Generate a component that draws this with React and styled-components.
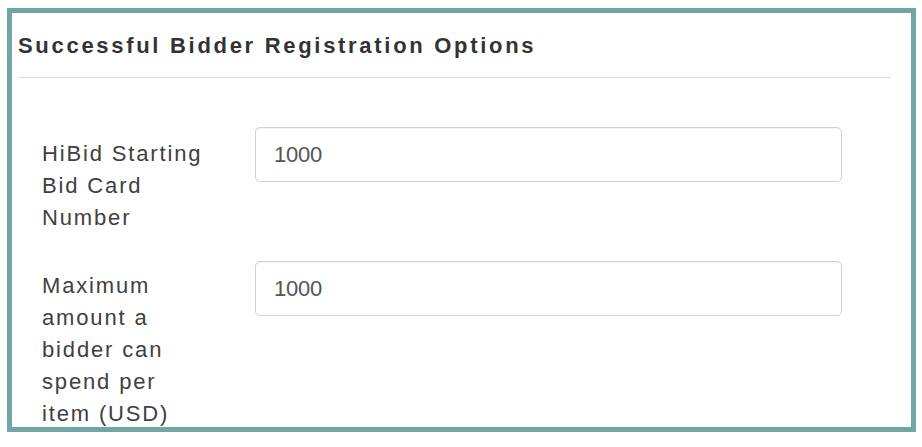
import React from 'react';
import styled, { createGlobalStyle } from 'styled-components';

const GlobalStyle = createGlobalStyle`
  html, body {
    margin: 0;
    padding: 0;
    background: #ffffff;
  }
  body {
    font-family: "Liberation Sans", Arial, sans-serif;
  }
`;

const Shell = styled.div`
  padding: 8px 6px 15px 7px;
`;

const Frame = styled.section`
  box-sizing: border-box;
  height: 424px;
  border: 5px solid #70a6a3;
  overflow: hidden;
  background: #fff;
`;

const Header = styled.header`
  padding: 20px 20px 0 6px;
`;

const Title = styled.h2`
  margin: 0;
  font-size: 22px;
  line-height: 25px;
  font-weight: bold;
  letter-spacing: 2.7px;
  color: #333;
`;

const Divider = styled.hr`
  margin: 19px 0 0;
  border: 0;
  border-top: 1px solid #dcdcdc;
`;

const Form = styled.form`
  display: flex;
  flex-direction: column;
  gap: 27px;
  padding: 49px 0 0 30px;
`;

const Row = styled.div`
  display: grid;
  grid-template-columns: 164px 587px;
  column-gap: 49px;
  align-items: start;
`;

const Label = styled.label`
  padding-top: ${({ $offset }) => $offset}px;
  font-size: 22px;
  line-height: 32px;
  letter-spacing: 1.85px;
  color: #404040;
`;

const Input = styled.input`
  box-sizing: border-box;
  width: 100%;
  height: 55px;
  padding: 0 18px;
  border: 1px solid #d2d2d2;
  border-radius: 5px;
  box-shadow: inset 0 1px 1px rgba(0, 0, 0, 0.05);
  font-family: "Liberation Sans", Arial, sans-serif;
  font-size: 22px;
  letter-spacing: -0.2px;
  color: #555;
  outline: none;
`;

const fields = [
  { id: 'startCard', label: 'HiBid Starting Bid Card Number', value: '1000', offset: 11 },
  { id: 'maxSpend', label: 'Maximum amount a bidder can spend per item (USD)', value: '1000', offset: 9 },
];

const App = () => {
  return (
    <>
      <GlobalStyle />
      <Shell>
        <Frame>
          <Header>
            <Title>Successful Bidder Registration Options</Title>
            <Divider />
          </Header>
          <Form>
            {fields.map((f) => (
              <Row key={f.id}>
                <Label htmlFor={f.id} $offset={f.offset}>{f.label}</Label>
                <Input id={f.id} type="text" defaultValue={f.value} />
              </Row>
            ))}
          </Form>
        </Frame>
      </Shell>
    </>
  );
};

export default App;
